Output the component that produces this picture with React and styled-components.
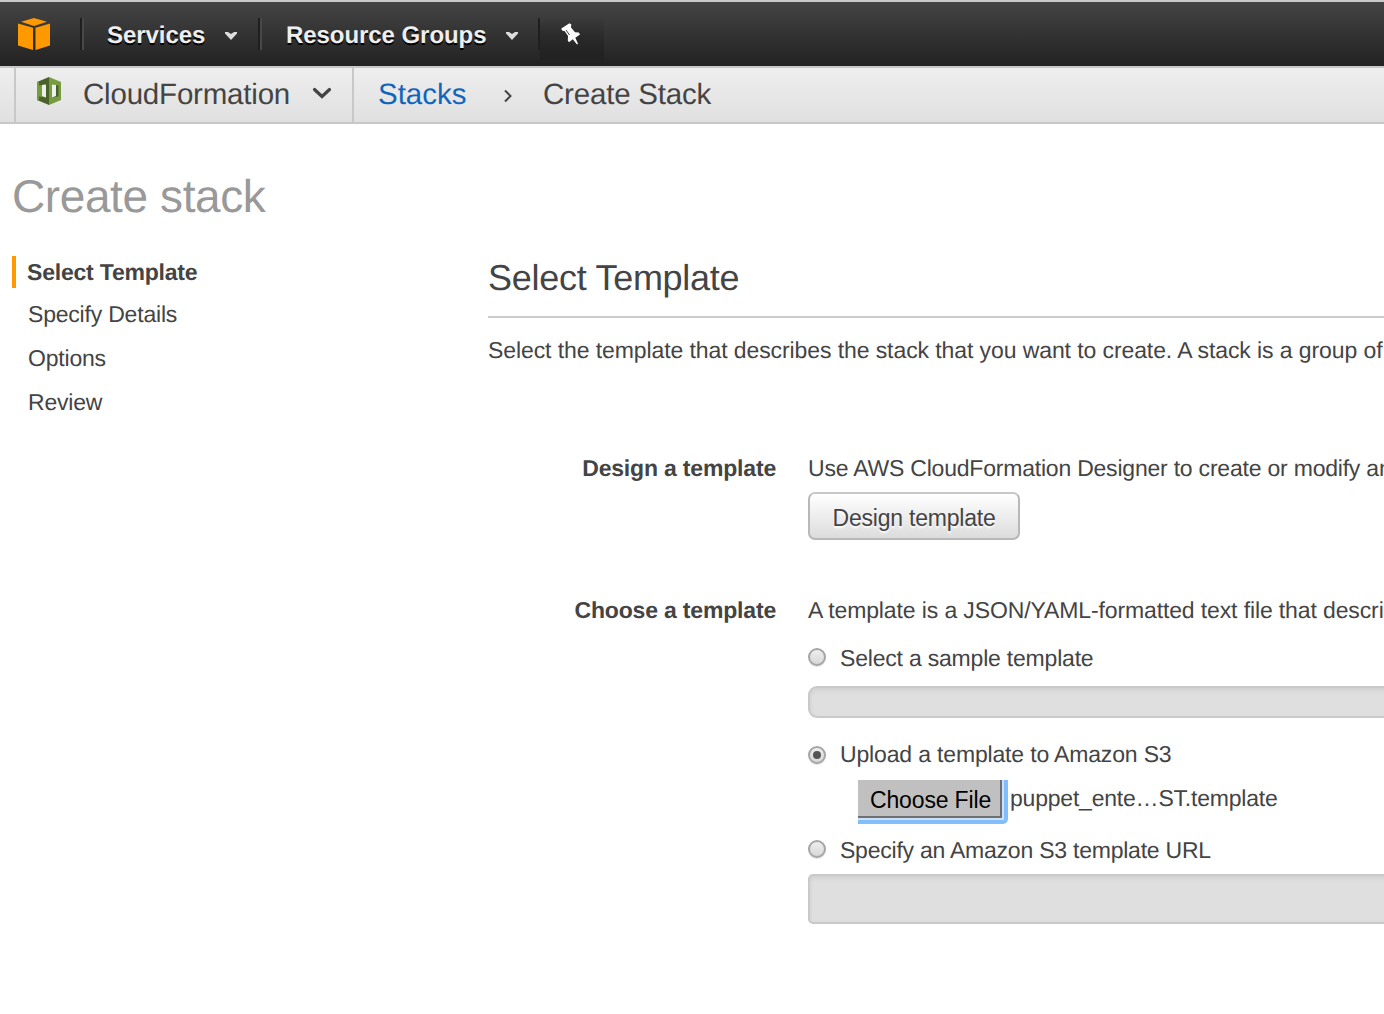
import React from "react";
import styled, { createGlobalStyle } from "styled-components";

const Global = createGlobalStyle`
  * { box-sizing: border-box; }
  html, body { margin: 0; padding: 0; background: #fff; }
  body {
    width: 100%;
    overflow: hidden;
    font-family: "Liberation Sans", Arial, sans-serif;
    font-size: 23px;
    line-height: 32px;
    letter-spacing: -0.15px;
    color: #444;
    text-rendering: geometricPrecision;
  }
`;

const Page = styled.div`
  height: 1014px;
  overflow: hidden;
  white-space: nowrap;
`;

const TopNav = styled.header`
  display: flex;
  align-items: flex-start;
  height: 66px;
  padding-top: 16px;
  border-top: 2px solid #c9cbcb;
  background: linear-gradient(#444, #222);
  svg { flex: none; display: block; }
`;

const Logo = styled.div`
  width: 80px;
  padding-left: 18px;
`;

const Divider = styled.span`
  flex: none;
  width: ${(p) => (p.$single ? 2 : 4)}px;
  height: 32px;
  border-left: 2px solid #1f1f1f;
  border-right: ${(p) => (p.$single ? "0" : "2px solid #484848")};
`;

const NavItem = styled.div`
  display: flex;
  align-items: center;
  gap: ${(p) => p.$gap}px;
  width: ${(p) => p.$width}px;
  height: 36px;
  padding-left: ${(p) => p.$pad}px;
  color: #eee;
  font-size: 24px;
  font-weight: 700;
  letter-spacing: -0.06px;
  text-shadow: 0 2px 0 #000;
`;

const PinTile = styled.div`
  width: 64px;
  height: 42px;
  padding: 5px 0 0 20px;
  background: linear-gradient(rgba(34, 34, 34, 0), #222);
`;

const Crumbs = styled.nav`
  display: flex;
  height: 58px;
  padding-left: 14px;
  border-top: 2px solid #c8c8c8;
  border-bottom: 2px solid #c8c8c8;
  background: linear-gradient(#eee, #e0e0e0);
  font-size: 29.5px;
  line-height: 54px;
  letter-spacing: -0.2px;
`;

const Service = styled.div`
  display: flex;
  width: 340px;
  padding-left: 21px;
  border-left: 2px solid #c8c8c8;
  border-right: 2px solid #c8c8c8;
  svg { flex: none; }
`;

const ServiceName = styled.span`
  flex: none;
  width: 251px;
  padding-left: 22px;
`;

const StacksLink = styled.a`
  width: 125px;
  margin-left: 24px;
  color: #1166bb;
  letter-spacing: 0;
`;

const CrumbNow = styled.span`
  margin-left: 30px;
`;

const Title = styled.h1`
  margin: 46px 0 34px 12px;
  color: #999;
  font-size: 46px;
  font-weight: 400;
  line-height: 52px;
  letter-spacing: -0.4px;
`;

const Body = styled.main`
  display: grid;
  grid-template-columns: 476px 1100px;
  padding-left: 12px;
`;

const Steps = styled.ol`
  margin: 0;
  padding: 0;
  list-style: none;
`;

const Step = styled.li`
  height: ${(p) => (p.$active ? 32 : 44)}px;
  margin-bottom: ${(p) => (p.$active ? 4 : 0)}px;
  padding-left: ${(p) => (p.$active ? 11 : 16)}px;
  border-left: ${(p) => (p.$active ? "4px solid #f90" : "0")};
  font-weight: ${(p) => (p.$active ? 700 : 400)};
  line-height: ${(p) => (p.$active ? 32 : 44)}px;
  letter-spacing: -0.2px;
`;

const SectionTitle = styled.h2`
  height: 62px;
  margin: 0 0 16px;
  border-bottom: 2px solid #ccc;
  font-size: 36px;
  font-weight: 400;
  line-height: 43px;
  letter-spacing: -0.28px;
`;

const Intro = styled.p`
  margin: 0 0 86px;
  letter-spacing: -0.09px;
`;

const Field = styled.section`
  display: grid;
  grid-template-columns: 288px 1fr;
  column-gap: 32px;
  margin-bottom: ${(p) => p.$after || 0}px;
`;

const FieldLabel = styled.div`
  font-weight: 700;
  text-align: right;
  letter-spacing: -0.18px;
`;

const Line = styled.div`
  letter-spacing: ${(p) => p.$tracking}px;
`;

const DesignButton = styled.button`
  display: block;
  width: 212px;
  height: 48px;
  margin-top: 8px;
  padding: 4px 0 0;
  border: 2px solid #b8b8b8;
  border-top-color: #c8c8c8;
  border-radius: 7px;
  background: linear-gradient(#fff, #dcdcdc);
  color: #444;
  font: inherit;
  line-height: 40px;
  letter-spacing: -0.22px;
  text-shadow: 0 2px 2px #fff;
`;

const Choice = styled.label`
  display: flex;
  gap: 14px;
  height: 32px;
  margin-top: ${(p) => p.$before}px;
  letter-spacing: ${(p) => p.$tracking}px;
`;

const Radio = styled.span`
  flex: none;
  display: grid;
  place-items: center;
  width: 18px;
  height: 18px;
  margin-top: ${(p) => p.$top}px;
  border: 2px solid #a6a6a6;
  border-radius: 50%;
  background: linear-gradient(#eee, #d8d8d8);
  box-shadow: 0 1px 1px rgba(0, 0, 0, 0.12);
  &::after {
    content: "";
    width: 8px;
    height: 8px;
    border-radius: 50%;
    background: ${(p) => (p.$on ? "#555" : "transparent")};
  }
`;

const DisabledBox = styled.div`
  height: ${(p) => p.$height}px;
  margin-top: ${(p) => p.$before}px;
  border: 2px solid #c9c9c9;
  border-radius: ${(p) => p.$radius}px;
  background: #dfdfdf;
  box-shadow: inset 0 2px 4px rgba(0, 0, 0, 0.08);
`;

const FileRow = styled.div`
  display: flex;
  height: 44px;
  margin: 10px 0 0 50px;
  letter-spacing: -0.21px;
  line-height: 36px;
`;

const FileClip = styled.div`
  width: 150px;
  height: 44px;
  margin-right: 2px;
  border-bottom-right-radius: 5px;
  overflow: hidden;
`;

const FileButton = styled.button`
  display: block;
  width: 144px;
  height: 38px;
  padding: 2px 0 0 12px;
  border: 0;
  border-right: 2px solid #6f6f6f;
  border-bottom: 2px solid #6f6f6f;
  background: #c0c0c0;
  box-shadow: 0 0 0 2px #c9e2ff, 0 0 0 6px #83bdfc;
  color: #000;
  font: inherit;
  line-height: 36px;
  letter-spacing: -0.15px;
  text-align: left;
`;

const CubeLogo = () => (
  <svg width="32" height="32" viewBox="0 0 32 32" fill="#f90">
    <path d="M16 0 29 3.7 16 8 3 3.7Z" />
    <path d="M0 5.5 15 9.7V32L0 27.5Z" />
    <path d="M32 5.5 17.5 9.7V32L32 27.5Z" />
  </svg>
);

const Caret = () => (
  <svg width="12" height="8" viewBox="0 0 12 8">
    <path d="M0 0H3L6 2 9 0H12V1.5L6 8 0 1.5Z" fill="#ddd" />
  </svg>
);

const Pin = () => (
  <svg width="22" height="24" viewBox="0 0 22 24">
    <path
      d="M1.3 5.5 9.5 .3 11.3 1.5 11 4.5 15 9.3 18.8 9.5 20 11.5 15.3 14.8 18 20.8 17 21.5 12.8 16.3 9 19.3 7.8 17.5 8 13 4.8 8.3 2 7.5Z"
      fill="#fff"
    />
    <path d="M6 7 9.5 12" stroke="#444" strokeWidth="1" fill="none" />
  </svg>
);

const FormationIcon = () => (
  <svg width="24" height="28" viewBox="0 0 24 28" style={{ marginTop: 9 }}>
    <path d="M12 0 0 5V23L12 28Z" fill="#4b612c" />
    <path d="M12 0 24 5V23L12 28Z" fill="#759c3e" />
    <path d="M0 5 2 4.2V23.8L0 23Z" fill="#759c3e" />
    <path d="M2 8.5 9 7.5V20.5L2 19.5Z" fill="#759c3e" />
    <path d="M5 8 9 7.5V20.5L5 19Z" fill="#eee" />
    <path d="M15 7.5 21.5 8.5V19.5L15 20.5Z" fill="#4b612c" />
    <path d="M15 7.5 19 8V19L15 20.5Z" fill="#eee" />
  </svg>
);

const ChevronDown = () => (
  <svg width="20" height="14" viewBox="0 0 20 14" fill="none" style={{ marginTop: 19 }}>
    <path d="M2.5 2.5 10 9.5 17.5 2.5" stroke="#444" strokeWidth="3.2" strokeLinecap="round" />
  </svg>
);

const ChevronRight = () => (
  <svg width="10" height="14" viewBox="0 0 10 14" fill="none" style={{ marginTop: 21 }}>
    <path d="M2 1.5 7.5 7 2 12.5" stroke="#444" strokeWidth="2" />
  </svg>
);

export default function App() {
  return (
    <Page>
      <Global />
      <TopNav>
        <Logo><CubeLogo /></Logo>
        <Divider />
        <NavItem $width={174} $pad={23} $gap={20}>Services <Caret /></NavItem>
        <Divider />
        <NavItem $width={276} $pad={24} $gap={19}>Resource Groups <Caret /></NavItem>
        <Divider $single />
        <PinTile><Pin /></PinTile>
      </TopNav>
      <Crumbs>
        <Service>
          <FormationIcon />
          <ServiceName>CloudFormation</ServiceName>
          <ChevronDown />
        </Service>
        <StacksLink>Stacks</StacksLink>
        <ChevronRight />
        <CrumbNow>Create Stack</CrumbNow>
      </Crumbs>
      <Title>Create stack</Title>
      <Body>
        <Steps>
          <Step $active>Select Template</Step>
          <Step>Specify Details</Step>
          <Step>Options</Step>
          <Step>Review</Step>
        </Steps>
        <div>
          <SectionTitle>Select Template</SectionTitle>
          <Intro>Select the template that describes the stack that you want to create. A stack is a group of</Intro>
          <Field $after={54}>
            <FieldLabel>Design a template</FieldLabel>
            <div>
              <Line $tracking={-0.21}>Use AWS CloudFormation Designer to create or modify an</Line>
              <DesignButton>Design template</DesignButton>
            </div>
          </Field>
          <Field>
            <FieldLabel>Choose a template</FieldLabel>
            <div>
              <Line $tracking={-0.12}>A template is a JSON/YAML-formatted text file that descri</Line>
              <Choice $before={16} $tracking={-0.2}><Radio $top={6} />Select a sample template</Choice>
              <DisabledBox $before={12} $height={32} $radius={9} />
              <Choice $before={20} $tracking={-0.16}><Radio $top={8} $on />Upload a template to Amazon S3</Choice>
              <FileRow>
                <FileClip><FileButton>Choose File</FileButton></FileClip>
                puppet_ente…ST.template
              </FileRow>
              <Choice $before={10} $tracking={-0.23}><Radio $top={6} />Specify an Amazon S3 template URL</Choice>
              <DisabledBox $before={8} $height={50} $radius={5} />
            </div>
          </Field>
        </div>
      </Body>
    </Page>
  );
}
